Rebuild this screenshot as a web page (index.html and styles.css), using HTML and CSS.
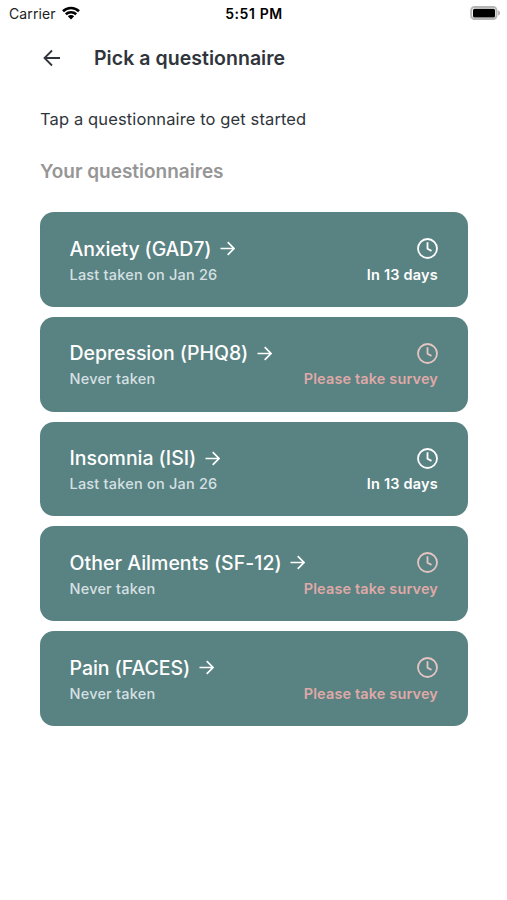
FILE: index.html
```html
<!DOCTYPE html>
<html lang="en">
<head>
<meta charset="utf-8">
<title>Pick a questionnaire</title>
<link rel="stylesheet" href="styles.css">
</head>
<body>
<svg width="0" height="0" class="defs">
  <symbol id="clock" viewBox="0 0 21 21"><circle cx="10.500" cy="10.500" r="9.500"/><path d="M10.500 4.200v6.500l4 2.200"/></symbol>
  <symbol id="arrow" viewBox="0 0 15 15"><path d="M.5 7.500h13.500M7.700 1.200 14 7.500l-6.300 6.300"/></symbol>
</svg>
<div class="status">
  <div class="carrier"><span>Carrier</span>
    <svg class="wifi" viewBox="0 0 18 14"><path d="M1 5.200a11.500 11.500 0 0 1 16 0M3.800 8.300a7.500 7.500 0 0 1 10.400 0"/><path class="dot" d="M9 13.500 5.800 10.200a4.600 4.600 0 0 1 6.400 0z"/></svg>
  </div>
  <span class="time">5:51 PM</span>
  <div class="battery"><svg viewBox="0 0 30 14"><rect class="shell" x="1.200" y="1" width="25.300" height="12" rx="3.300"/><rect x="3" y="2.700" width="22" height="8.800" rx="1.500"/><path d="M28 4.500c3 .9 3 4.100 0 5z" class="tip"/></svg></div>
</div>
<header>
  <svg class="back" viewBox="0 0 18 18"><path d="M17 9H2M9 1.500 1.500 9 9 16.500"/></svg>
  <h1>Pick a questionnaire</h1>
</header>
<main>
  <p class="intro">Tap a questionnaire to get started</p>
  <h2>Your questionnaires</h2>
  <div class="list">
    <div class="card">
      <div class="row top"><span class="tight">Anxiety (GAD7)</span><svg class="arrow"><use href="#arrow"/></svg><svg class="clock"><use href="#clock"/></svg></div>
      <div class="row sub"><span>Last taken on Jan 26</span><span class="due">In 13 days</span></div>
    </div>
    <div class="card alert">
      <div class="row top"><span>Depression (PHQ8)</span><svg class="arrow"><use href="#arrow"/></svg><svg class="clock"><use href="#clock"/></svg></div>
      <div class="row sub"><span>Never taken</span><span class="due">Please take survey</span></div>
    </div>
    <div class="card">
      <div class="row top"><span>Insomnia (ISI)</span><svg class="arrow"><use href="#arrow"/></svg><svg class="clock"><use href="#clock"/></svg></div>
      <div class="row sub"><span>Last taken on Jan 26</span><span class="due">In 13 days</span></div>
    </div>
    <div class="card alert">
      <div class="row top"><span class="wide">Other Ailments (SF-12)</span><svg class="arrow"><use href="#arrow"/></svg><svg class="clock"><use href="#clock"/></svg></div>
      <div class="row sub"><span>Never taken</span><span class="due">Please take survey</span></div>
    </div>
    <div class="card alert">
      <div class="row top"><span>Pain (FACES)</span><svg class="arrow"><use href="#arrow"/></svg><svg class="clock"><use href="#clock"/></svg></div>
      <div class="row sub"><span>Never taken</span><span class="due">Please take survey</span></div>
    </div>
  </div>
</main>
</body>
</html>
```
FILE: styles.css
```css
* { box-sizing: border-box; margin: 0; }
body { background: #fff; color: #30353b; font-family: Inter, "Liberation Sans", sans-serif; white-space: nowrap; }
svg { fill: none; stroke: currentColor; stroke-width: 2; flex: none; }
.defs { display: block; height: 0; }
.status { height: 27px; display: grid; grid-template-columns: 1fr auto 1fr; align-items: center; padding: 0 7px 0 9px; color: #000; font-size: 14px; }
.carrier { display: flex; align-items: center; gap: 6px; letter-spacing: .1px; color: #222; }
.wifi { width: 18px; height: 14px; stroke-width: 2.600; color: #000; margin-top: -1px; }
.dot { fill: #000; stroke: none; }
.time { font-weight: 600; letter-spacing: .6px; margin-right: 1px; }
.battery { display: flex; justify-content: flex-end; }
.battery svg { width: 30px; height: 14px; margin-top: -1px; fill: #000; stroke: none; }
.battery .shell { fill: none; stroke: #b5b5b5; stroke-width: 2; }
.battery .tip { fill: #b5b5b5; }
header { height: 61px; display: flex; align-items: center; padding-left: 43px; gap: 33px; }
.back { width: 18px; height: 18px; stroke-width: 1.800; }
h1 { font-size: 19.500px; font-weight: 600; letter-spacing: .04px; }
main { padding: 19px 39px 0 40px; }
.intro { font-size: 16.500px; line-height: 24px; letter-spacing: .12px; }
h2 { margin-top: 27px; color: #969696; font-size: 19px; line-height: 28px; font-weight: 600; }
.list { display: grid; gap: 10px; margin-top: 26.300px; }
.card { height: 94.700px; border-radius: 14px; background: #598282; color: #fff; padding: 23.500px 30px 0 29.500px; }
.row { height: 26px; display: flex; align-items: center; }
.top { font-size: 19.500px; font-weight: 500; letter-spacing: -.05px; }
.tight { letter-spacing: -.14px; }
.wide { letter-spacing: .03px; }
.arrow { width: 15px; height: 15px; margin-left: 8.500px; stroke-width: 1.700; }
.sub { font-size: 14.500px; font-weight: 500; letter-spacing: .21px; color: #d5e0e2; line-height: 25px; height: 25px; }
.due { margin-left: auto; color: #fff; font-weight: 600; letter-spacing: .2px; }
.clock { width: 21px; height: 21px; margin-left: auto; stroke-width: 1.800; }
.alert .due { color: #dfa9a7; letter-spacing: .13px; }
.alert .clock { color: #e4c5c1; }
```
